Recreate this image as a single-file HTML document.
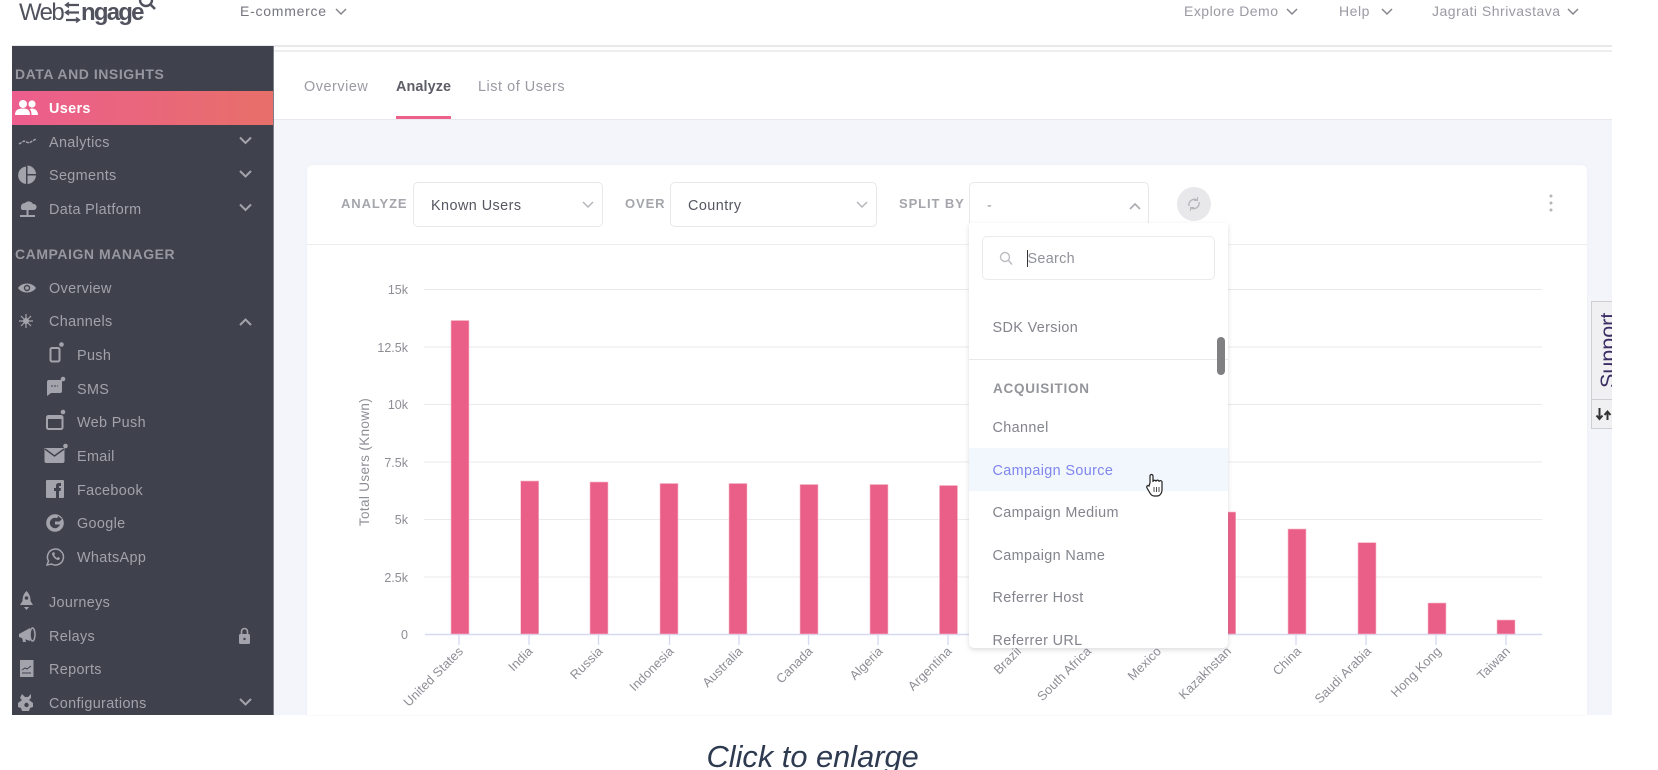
<!DOCTYPE html>
<html><head><meta charset="utf-8"><title>WebEngage</title>
<style>
html,body{margin:0;padding:0;background:#fff;width:1658px;height:770px;overflow:hidden}
body{font-family:"Liberation Sans",sans-serif;position:relative}
#w{position:absolute;left:0;top:0;width:1658px;height:770px;overflow:hidden;filter:blur(.35px)}
.a{position:absolute;white-space:nowrap;line-height:18px}
.box{position:absolute;box-sizing:border-box}
.s{font-size:14.4px;color:#a2a3aa;letter-spacing:.35px;margin-top:1px}
.h{font-size:14px;font-weight:bold;color:#96979f;letter-spacing:.55px}
.t{font-size:14px;color:#9a9aa3;letter-spacing:.55px}
.l{font-size:13px;font-weight:bold;color:#a5a6ac;letter-spacing:.9px;margin-top:1px}
.v{font-size:14.4px;color:#555761;letter-spacing:.45px;margin-top:1px}
.d{font-size:14.4px;color:#83848d;letter-spacing:.37px;margin-top:1px}
</style></head><body><div id="w">

<!-- main background -->
<div class="box" style="left:274px;top:119px;width:1338px;height:596px;background:#f4f5fa"></div>
<div class="box" style="left:12px;top:45px;width:1600px;height:2px;background:#e9e9eb"></div>
<div class="box" style="left:274px;top:50px;width:1338px;height:2px;background:#eeeeef"></div>
<div class="box" style="left:274px;top:118.5px;width:1338px;height:1px;background:#e8e9ee"></div>

<!-- header -->
<div class="a" style="left:19px;top:-4px;font-size:24px;line-height:34px;color:#50525d;letter-spacing:-1.6px">Web</div>
<div class="a" style="left:81px;top:-4px;font-size:24px;line-height:34px;color:#50525d;letter-spacing:-1.8px;font-weight:bold">ngage</div>
<svg style="position:absolute;left:0;top:0" width="170" height="30" fill="none" stroke="#50525d">
<path d="M66 5H79M66 12.5H79M66 20H79" stroke-width="2.2"/>
<path d="M69 2.500L65.500 5L69 7.500M69 10L65.500 12.500L69 15M76 17.500L79.500 20L76 22.500" stroke-width="1.500"/>
<circle cx="146" cy="0" r="6" stroke-width="2.400"/><path d="M150 4L155 9" stroke-width="2.600"/>
</svg>
<div class="a t" style="left:240px;top:2px;color:#75767f;letter-spacing:.75px">E-commerce</div>
<div class="a t" style="left:1184px;top:2px;letter-spacing:.48px">Explore Demo</div>
<div class="a t" style="left:1339px;top:2px">Help</div>
<div class="a t" style="left:1432px;top:2px;letter-spacing:.5px">Jagrati Shrivastava</div>
<svg style="position:absolute;left:0;top:0" width="1658" height="30" fill="none" stroke="#85868e" stroke-width="1.500">
<path d="M336 9L341 14L346 9M1287 9L1292 14L1297 9M1382 9L1387 14L1392 9M1568 9L1573 14L1578 9"/>
</svg>

<!-- sidebar -->
<div class="box" style="left:12px;top:46px;width:262px;height:669px;background:#3f414d;border-right:1px solid #7c7d86"></div>
<div class="box" style="left:12px;top:91px;width:261px;height:34px;background:linear-gradient(90deg,#ec5e8e,#e76f69)"></div>
<div class="a h" style="left:15px;top:65px">DATA AND INSIGHTS</div>
<div class="a s" style="left:49px;top:99px;color:#fff;font-weight:bold">Users</div>
<div class="a s" style="left:49px;top:133px">Analytics</div>
<div class="a s" style="left:49px;top:166px">Segments</div>
<div class="a s" style="left:49px;top:200px">Data Platform</div>
<div class="a h" style="left:15px;top:245px">CAMPAIGN MANAGER</div>
<div class="a s" style="left:49px;top:279px">Overview</div>
<div class="a s" style="left:49px;top:312px">Channels</div>
<div class="a s" style="left:77px;top:346px">Push</div>
<div class="a s" style="left:77px;top:380px">SMS</div>
<div class="a s" style="left:77px;top:413px">Web Push</div>
<div class="a s" style="left:77px;top:447px">Email</div>
<div class="a s" style="left:77px;top:481px">Facebook</div>
<div class="a s" style="left:77px;top:514px">Google</div>
<div class="a s" style="left:77px;top:548px">WhatsApp</div>
<div class="a s" style="left:49px;top:593px">Journeys</div>
<div class="a s" style="left:49px;top:627px">Relays</div>
<div class="a s" style="left:49px;top:660px">Reports</div>
<div class="a s" style="left:49px;top:694px">Configurations</div>
<svg style="position:absolute;left:0;top:0" width="274" height="715" fill="#a3a4ab">
<!-- users -->
<g fill="#fff"><circle cx="23" cy="104" r="4"/><circle cx="32" cy="104" r="3.600"/><path d="M15 115c0-5 3-6.500 8-6.500s7 2 7 6.500zM32 108.500c3 0 6 2 6 6.500h-6.500c0-3-.5-5-2-6z"/></g>
<!-- analytics -->
<path d="M19 144L24 141L29 143L36 139" fill="none" stroke="#a3a4ab" stroke-width="1.400" stroke-dasharray="3 1"/>
<!-- segments -->
<path d="M26 166.500a8.800 8.800 0 0 0 0 17.500zM27.500 165.500a9 9 0 0 1 8.500 8.500h-8.500zM27.500 175.500h8.500a9 9 0 0 1-8.500 8.500z"/>
<!-- data platform -->
<path d="M21 208a4 4 0 0 1 4-5a5 5 0 0 1 8 1a3 3 0 0 1 1 6H22a2 2 0 0 1-1-2zM26.500 210h2v6h-2zM20 215h15v2H20z"/>
<!-- eye -->
<path d="M18 288c4-6 14-6 18 0c-4 6-14 6-18 0z"/><circle cx="27" cy="288" r="3.200" fill="#3f414d"/><circle cx="27" cy="288" r="1.800"/>
<!-- channels -->
<g stroke="#a3a4ab" stroke-width="1.200"><path d="M26 314v14M19 321h14M21 316l10 10M31 316l-10 10"/></g><circle cx="26" cy="321" r="3"/>
<!-- push -->
<rect x="50.500" y="348" width="9" height="13.500" rx="1.500" fill="none" stroke="#a3a4ab" stroke-width="2"/><circle cx="61.500" cy="344.500" r="2.300"/>
<!-- sms -->
<path d="M47 382a2 2 0 0 1 2-2h13v11a2 2 0 0 1-2 2H51l-4 3z"/><path d="M51 386h7" stroke="#3f414d" stroke-dasharray="2 1"/><circle cx="63" cy="379" r="2.300"/>
<!-- web push -->
<rect x="47" y="416" width="15.500" height="13" rx="1.500" fill="none" stroke="#a3a4ab" stroke-width="2"/><path d="M47 418h15" stroke="#a3a4ab" stroke-width="2"/><circle cx="63" cy="412" r="2.300"/>
<!-- email -->
<path d="M44.500 448h20v13a2 2 0 0 1-2 2h-16a2 2 0 0 1-2-2z"/><path d="M45 449l9.500 7l9.500-7" fill="none" stroke="#3f414d" stroke-width="1.500"/><circle cx="65.500" cy="446" r="2.300"/>
<!-- facebook -->
<rect x="46" y="480" width="18" height="18" rx="1"/><path d="M56 498v-7h-2v-3h2v-2c0-2 1-3 3-3h2v3h-1c-1 0-1 0-1 1v1h2l-.5 3H59v7z" fill="#3f414d"/>
<!-- google -->
<circle cx="55" cy="523" r="7" fill="none" stroke="#a3a4ab" stroke-width="3.600"/><rect x="55" y="521.500" width="7" height="3"/><path d="M58 516l4 3l-2 2l-3-2z" fill="#3f414d"/>
<!-- whatsapp -->
<path d="M47 565l1.500-4a8 8 0 1 1 3 3z" fill="none" stroke="#a3a4ab" stroke-width="1.500"/><path d="M52 553c0 3 3 7 7 7l1-2l-2-1l-1 1c-1 0-2-2-3-3l1-1l-1-2z"/>
<!-- journeys -->
<path d="M26.500 591c3 3 4 6 4 10l2.500 4h-13l2.500-4c0-4 1-7 4-10z"/><circle cx="26.500" cy="598" r="1.800" fill="#3f414d"/><path d="M24 607h5l-2.500 3z"/>
<!-- relays -->
<path d="M19 634l11-6v13l-11-4z"/><path d="M22 637l3 1l1 4h-3z"/><ellipse cx="32.500" cy="634.500" rx="2.500" ry="6.500" fill="none" stroke="#a3a4ab" stroke-width="1.500"/>
<!-- lock -->
<rect x="239" y="634" width="11" height="10" rx="1.500"/><path d="M241.500 634v-2.500a3 3 0 0 1 6 0v2.500" fill="none" stroke="#a3a4ab" stroke-width="1.600"/><circle cx="244.500" cy="639" r="1.200" fill="#3f414d"/>
<!-- reports -->
<rect x="20" y="660" width="13.500" height="17"/><path d="M22 670l3-2l2 1l4-3M22 673h9" fill="none" stroke="#3f414d" stroke-width="1"/>
<!-- configurations -->
<path d="M22 694l3 3h3l3-3v4l-2 2l4 3v4l-3 1l-1 3h-7l-1-3l-3-1v-4l4-3l-2-2z"/><circle cx="26.500" cy="705" r="2.200" fill="#3f414d"/>
<g fill="none" stroke="#a3a4ab" stroke-width="2"><path d="M240 137.500L245.500 143L251 137.500M240 171L245.500 176.500L251 171M240 204.500L245.500 210L251 204.500M240 699L245.500 704.500L251 699M240 325L245.500 319.500L251 325"/></g>
</svg>

<!-- tabs -->
<div class="box" style="left:274px;top:52px;width:1338px;height:66.500px;background:#fff"></div>
<div class="a t" style="left:304px;top:77.500px;font-size:14.400px">Overview</div>
<div class="a t" style="left:396px;top:77.500px;font-size:14.400px;color:#5d5e67;font-weight:bold;letter-spacing:.1px">Analyze</div>
<div class="a t" style="left:478px;top:77.500px;font-size:14.400px">List of Users</div>
<div class="box" style="left:396px;top:115.500px;width:55px;height:3px;background:#ec6089"></div>

<!-- card -->
<div class="box" style="left:307px;top:165px;width:1280px;height:550px;background:#fff;border-radius:6px 6px 0 0;box-shadow:0 0 2px #eceef4"></div>
<div class="box" style="left:307px;top:243.500px;width:1280px;height:1.500px;background:#eeeef1"></div>

<div class="a l" style="left:341px;top:194px">ANALYZE</div>
<div class="box" style="left:413px;top:182px;width:190px;height:45px;border:1px solid #e8e8eb;border-radius:5px"></div>
<div class="a v" style="left:431px;top:196px">Known Users</div>
<div class="a l" style="left:625px;top:194px">OVER</div>
<div class="box" style="left:670px;top:182px;width:207px;height:45px;border:1px solid #e8e8eb;border-radius:5px"></div>
<div class="a v" style="left:688px;top:196px">Country</div>
<div class="a l" style="left:899px;top:194px">SPLIT BY</div>
<div class="box" style="left:969px;top:182px;width:180px;height:43px;border:1px solid #e8e8eb;border-bottom:0;border-radius:5px 5px 0 0"></div>
<div class="a v" style="left:987px;top:196px;color:#999">-</div>
<svg style="position:absolute;left:0;top:0" width="1658" height="230" fill="none">
<path d="M583 202L588 207L593 202M857 202L862 207L867 202" stroke="#b5b6bb" stroke-width="1.500"/>
<path d="M1130 209L1135 204L1140 209" stroke="#aeafb4" stroke-width="1.800"/>
<circle cx="1194" cy="204" r="17" fill="#e8e8ea"/>
<path d="M1189 206a5.500 5.500 0 0 1 8-6M1199 202a5.500 5.500 0 0 1-8 6" stroke="#b6b7bb" stroke-width="1.400"/>
<path d="M1197.500 197v3.500h-3.500M1190.500 211v-3.500h3.500" stroke="#b6b7bb" stroke-width="1"/>
<g fill="#b4b5ba"><circle cx="1551" cy="196" r="1.500"/><circle cx="1551" cy="203" r="1.500"/><circle cx="1551" cy="210" r="1.500"/></g>
</svg>

<!-- chart -->
<svg style="position:absolute;left:0;top:0" width="1658" height="715" font-family="'Liberation Sans',sans-serif" font-size="12.500" fill="#8d8e95">
<g stroke="#eaeaec" stroke-width="1"><path d="M424 289.500H1542M424 347H1542M424 404.500H1542M424 462H1542M424 519.500H1542M424 577H1542"/></g>
<path d="M425 634.500H1542" stroke="#d5daf2" stroke-width="1.500"/>
<g stroke="#d5daf2" stroke-width="1.300"><path d="M459 635v10M529 635v10M598.500 635v10M669.500 635v10M739 635v10M808.500 635v10M878 635v10M948 635v10M1017 635v10M1087 635v10M1157 635v10M1227 635v10M1296 635v10M1366 635v10M1436 635v10M1506 635v10"/></g>
<g fill="#ea5f88" stroke="#f5b9cb" stroke-width=".6">
<rect x="451" y="320.500" width="18" height="313.500"/>
<rect x="520.700" y="481" width="18" height="153"/>
<rect x="590" y="482" width="18" height="152"/>
<rect x="660" y="483.500" width="18" height="150.500"/>
<rect x="729" y="483.500" width="18" height="150.500"/>
<rect x="800" y="484.500" width="18" height="149.500"/>
<rect x="870" y="484.500" width="18" height="149.500"/>
<rect x="939.500" y="485.500" width="18" height="148.500"/>
<rect x="1217.700" y="512" width="18" height="122"/>
<rect x="1288" y="529" width="18" height="105"/>
<rect x="1358" y="542.600" width="18" height="91.400"/>
<rect x="1428" y="603" width="18" height="31"/>
<rect x="1497" y="620" width="18" height="14"/>
</g>
<g text-anchor="end">
<text x="408" y="294">15k</text><text x="408" y="352">12.5k</text><text x="408" y="409">10k</text><text x="408" y="467">7.5k</text><text x="408" y="524">5k</text><text x="408" y="582">2.5k</text><text x="408" y="639">0</text>
</g>
<text transform="translate(369 462) rotate(-90)" text-anchor="middle" font-size="13.500" letter-spacing=".35">Total Users (Known)</text>
<g text-anchor="end" font-size="12.800" letter-spacing=".1">
<text transform="translate(464 652) rotate(-45)">United States</text>
<text transform="translate(533.500 652) rotate(-45)">India</text>
<text transform="translate(603.500 652) rotate(-45)">Russia</text>
<text transform="translate(674.500 652) rotate(-45)">Indonesia</text>
<text transform="translate(743.500 652) rotate(-45)">Australia</text>
<text transform="translate(813.500 652) rotate(-45)">Canada</text>
<text transform="translate(883.500 652) rotate(-45)">Algeria</text>
<text transform="translate(952.500 652) rotate(-45)">Argentina</text>
<text transform="translate(1022 652) rotate(-45)">Brazil</text>
<text transform="translate(1092 652) rotate(-45)">South Africa</text>
<text transform="translate(1162 652) rotate(-45)">Mexico</text>
<text transform="translate(1232 652) rotate(-45)">Kazakhstan</text>
<text transform="translate(1302 652) rotate(-45)">China</text>
<text transform="translate(1372 652) rotate(-45)">Saudi Arabia</text>
<text transform="translate(1442 652) rotate(-45)">Hong Kong</text>
<text transform="translate(1511 652) rotate(-45)">Taiwan</text>
</g>
</svg>

<!-- dropdown -->
<div class="box" style="left:969px;top:223px;width:259px;height:425px;background:#fff;border-radius:0 0 5px 5px;box-shadow:0 2px 5px rgba(120,120,130,.25);overflow:hidden">
  <div class="box" style="left:0;top:136px;width:259px;height:1px;background:#e8e8ea"></div>
  <div class="box" style="left:0;top:225px;width:259px;height:43px;background:#f2f6fd"></div>
  <div class="a d" style="left:23.500px;top:95px">SDK Version</div>
  <div class="a" style="left:24px;top:157px;font-size:13.500px;font-weight:bold;color:#94959b;letter-spacing:.75px">ACQUISITION</div>
  <div class="a d" style="left:23.500px;top:195px">Channel</div>
  <div class="a d" style="left:23.500px;top:238px;color:#7f86ee">Campaign Source</div>
  <div class="a d" style="left:23.500px;top:280px">Campaign Medium</div>
  <div class="a d" style="left:23.500px;top:323px">Campaign Name</div>
  <div class="a d" style="left:23.500px;top:365px">Referrer Host</div>
  <div class="a d" style="left:23.500px;top:408px">Referrer URL</div>
  <div class="box" style="left:248px;top:114px;width:8px;height:38px;background:#808083;border-radius:4px"></div>
</div>
<div class="box" style="left:981.500px;top:236px;width:233.500px;height:44px;border:1px solid #ebebed;border-radius:5px;background:#fff"></div>
<div class="a" style="left:1027.500px;top:250px;font-size:14.400px;color:#90919a;letter-spacing:.3px">Search</div>
<div class="box" style="left:1027px;top:250px;width:1px;height:17px;background:#333"></div>
<svg style="position:absolute;left:0;top:0" width="1658" height="520" fill="none">
<circle cx="1005" cy="257" r="4.500" stroke="#bcbdc2" stroke-width="1.400"/><path d="M1008.500 260.500L1012 264.500" stroke="#bcbdc2" stroke-width="1.600"/>
<!-- hand cursor -->
<path d="M1150 483V476a1.500 1.500 0 0 1 3 0L1153 482a1.500 1.500 0 0 1 3-.5a1.500 1.500 0 0 1 3 .3a1.500 1.500 0 0 1 3 .7V490c0 3-2 6-5 6h-3c-3 0-4-3-7-8c-1-2 1-3 2-2z" fill="#fff" stroke="#222" stroke-width="1.200"/>
<path d="M1154 487v5M1156.500 487v5M1159 487v5" stroke="#222" stroke-width=".8"/>
</svg>

<!-- support -->
<div class="box" style="left:1591px;top:301px;width:22px;height:128px;background:#f0f0f2;border:1px solid #cfcfd3;border-right:0;overflow:hidden">
  <div class="box" style="left:0;top:97px;width:22px;height:1px;background:#cfcfd3"></div>
  <div class="a" style="left:4.400px;top:86px;font-size:21.500px;line-height:24px;color:#3b2c63;transform-origin:0 0;transform:rotate(-90deg)">Support</div>
</div>
<svg style="position:absolute;left:0;top:0" width="1658" height="440" fill="none" stroke="#333">
<path d="M1599.500 408v11M1596.500 415.500l3 3.500l3-3.500" stroke-width="2"/>
<path d="M1607.500 420v-8M1604.500 415l3-3.500l3 3.500" stroke-width="2"/>
</svg>
<div class="box" style="left:1612px;top:0;width:46px;height:770px;background:#fff"></div>

<!-- caption -->
<div class="a" style="left:706.500px;top:738px;font-size:30.800px;line-height:38px;font-style:italic;color:#2d3a50">Click to enlarge</div>

</div></body></html>
